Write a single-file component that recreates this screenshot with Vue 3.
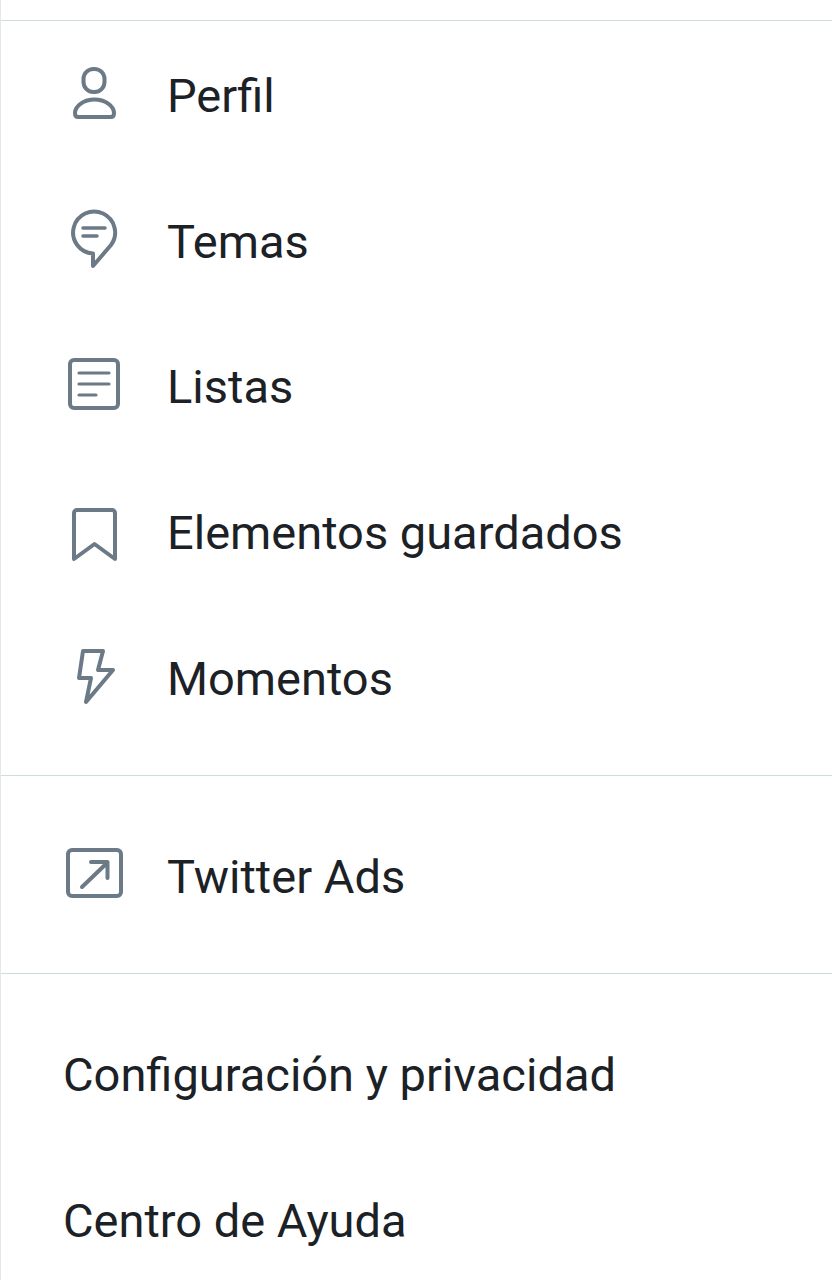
<template>
  <div class="drawer">
    <section class="group first">
      <div v-for="item in mainItems" :key="item.label" class="row">
        <svg class="icon" viewBox="0 0 64 64" v-html="item.icon"></svg>
        <span class="label">{{ item.label }}</span>
      </div>
    </section>
    <section class="group ads">
      <div class="row">
        <svg class="icon" viewBox="0 0 64 64">
          <rect x="6" y="6" width="53" height="46" rx="4" />
          <path class="thin" d="M20 43 45 19M29 18H45.5V34" />
        </svg>
        <span class="label">Twitter Ads</span>
      </div>
    </section>
    <section class="group last">
      <div class="row plain"><span class="label">Configuración y privacidad</span></div>
      <div class="row plain"><span class="label">Centro de Ayuda</span></div>
    </section>
  </div>
</template>

<script setup>
const mainItems = [
  {
    label: 'Perfil',
    icon: '<rect x="21.5" y="5" width="21" height="23" rx="10" /><path d="M13 49C13 42 22 35.5 32.5 35.5S52 42 52 49C52 52 51 53 49 53H16C14 53 13 52 13 49Z" />'
  },
  {
    label: 'Temas',
    icon: '<path d="M31 57V44.5A21 21 0 1 1 49 36L31 57Z" /><path stroke-width="3.5" d="M21 19H43M21 27H35" />'
  },
  {
    label: 'Listas',
    icon: '<rect x="8" y="5" width="48" height="48" rx="4" /><path stroke-width="3.2" d="M17 18H47M17 29H47M17 40H34" />'
  },
  {
    label: 'Elementos guardados',
    icon: '<path d="M12 58V12A3 3 0 0 1 15 9H50A3 3 0 0 1 53 12V58L32.5 43Z" />'
  },
  {
    label: 'Momentos',
    icon: '<path d="M21 5H41L36 24H51L24 56 29 32H17Z" />'
  }
]
</script>

<style>
html, body { background: #fff; }
</style>

<style scoped>
.drawer {
  width: 832px;
  height: 1280px;
  box-sizing: border-box;
  padding-top: 20px;
  overflow: hidden;
  border-left: 1px solid #e3e8eb;
  font-family: Roboto, "Liberation Sans", sans-serif;
  color: #1c2126;
  background: #fff;
}
.group { border-top: 1px solid #cfdcdc; }
.first { height: 755px; padding-top: 2px; box-sizing: border-box; }
.ads { height: 198px; padding-top: 27px; box-sizing: border-box; }
.last { padding-top: 28px; }
.row {
  display: flex;
  align-items: center;
  height: 145.6px;
  padding-left: 61px;
}
.ads .row { height: 146px; }
.row.plain { padding-left: 62px; }
.icon {
  flex: none;
  width: 64px;
  height: 64px;
  margin-right: 41px;
  fill: none;
  stroke: #6b7a86;
  stroke-width: 4;
  stroke-linejoin: round;
  stroke-linecap: round;
}
.label { font-size: 47px; line-height: 1; white-space: nowrap; }
</style>
